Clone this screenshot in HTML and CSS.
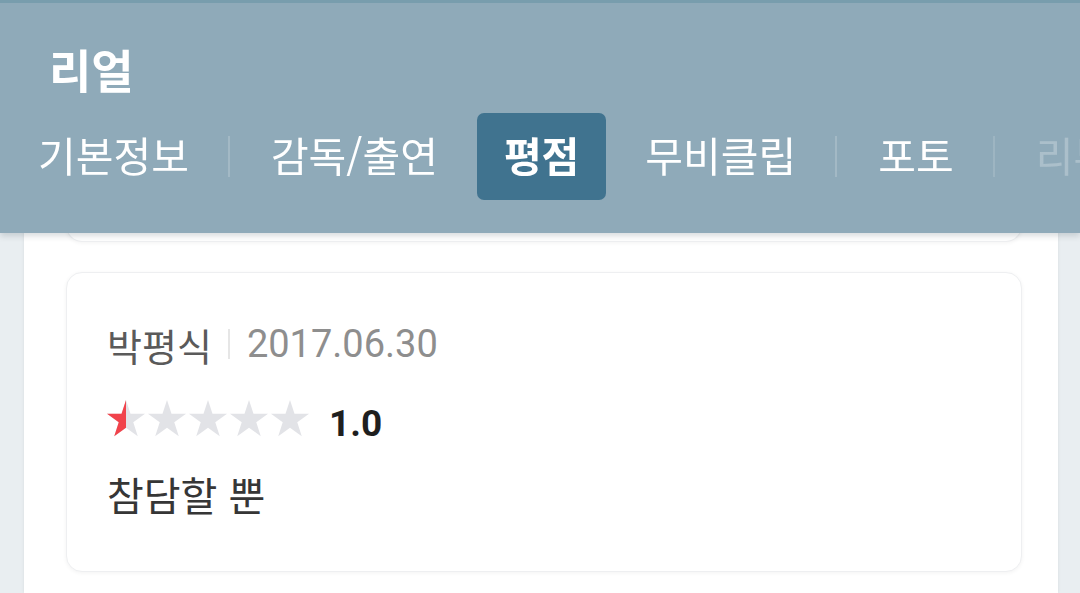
FILE: index.html
```html
<!DOCTYPE html>
<html lang="ko">
<head>
<meta charset="utf-8">
<title>리얼 - 평점</title>
<link rel="stylesheet" href="styles.css">
</head>
<body>
<header class="header">
  <h1 class="title">리얼</h1>
  <nav class="tabs">
    <a class="tab">기본정보</a>
    <span class="sep"></span>
    <a class="tab">감독/출연</a>
    <a class="tab active">평점</a>
    <a class="tab">무비클립</a>
    <span class="sep"></span>
    <a class="tab">포토</a>
    <span class="sep"></span>
    <a class="tab">리뷰</a>
  </nav>
</header>
<main class="panel">
  <div class="list">
    <div class="card prev"></div>
    <div class="card review">
      <div class="meta">
        <span class="name">박평식</span>
        <span class="msep"></span>
        <span class="date">2017.06.30</span>
      </div>
      <div class="rating">
        <svg class="stars" width="203" height="37" viewBox="0 0 203 37">
          <defs>
            <path id="star" d="M0,-20 L4.49,-6.18 L19.02,-6.18 L7.27,2.36 L11.76,16.18 L0,7.64 L-11.76,16.18 L-7.27,2.36 L-19.02,-6.18 L-4.49,-6.18 Z"/>
          </defs>
          <g fill="#e2e3e7">
            <use href="#star" x="19" y="20"/>
            <use href="#star" x="60" y="20"/>
            <use href="#star" x="101" y="20"/>
            <use href="#star" x="142" y="20"/>
            <use href="#star" x="183" y="20"/>
          </g>
          <path fill="#f1434b" transform="translate(19 20)" d="M0,-20 L0,7.64 L-11.76,16.18 L-7.27,2.36 L-19.02,-6.18 L-4.49,-6.18 Z"/>
        </svg>
        <span class="score">1.0</span>
      </div>
      <p class="text">참담할 뿐</p>
    </div>
  </div>
</main>
</body>
</html>
```
FILE: styles.css
```css
html, body {
  margin: 0;
  padding: 0;
}
body {
  background: #e9eef1;
  font-family: Roboto, "Noto Sans CJK KR", sans-serif;
  overflow: hidden;
}
.header {
  position: fixed;
  top: 0;
  left: 0;
  right: 0;
  height: 233px;
  box-sizing: border-box;
  background: #8faab9;
  border-top: 3px solid #789dad;
  box-shadow: 0 3px 6px rgba(40, 60, 70, 0.18);
  padding-top: 37px;
  z-index: 2;
}
.title {
  margin: 0;
  padding-left: 49px;
  font-family: "Noto Sans CJK KR", sans-serif;
  font-size: 46px;
  font-weight: 700;
  line-height: 56px;
  color: #fff;
}
.tabs {
  position: relative;
  margin-top: 17px;
  height: 87px;
  display: flex;
  align-items: center;
  white-space: nowrap;
  overflow: hidden;
  padding-left: 5px;
}
.tabs::after {
  content: "";
  position: absolute;
  top: 0;
  right: 0;
  bottom: 0;
  width: 110px;
  background: linear-gradient(to right, rgba(143, 170, 185, 0), rgba(143, 170, 185, 0.75) 60%);
}
.tab {
  flex: none;
  box-sizing: border-box;
  margin: 0 6px;
  padding: 0 27px 4px;
  height: 87px;
  line-height: 83px;
  font-family: "Noto Sans CJK KR", sans-serif;
  font-size: 41px;
  color: #fff;
  border-radius: 7px;
}
.tab.active {
  padding: 0 27px 4px;
  background: #40738f;
  font-weight: 700;
}
.sep {
  flex: none;
  width: 2px;
  height: 41px;
  margin: 0 8px 0 6px;
  background: rgba(255, 255, 255, 0.18);
}
.panel {
  margin: 0 22px 0 24px;
  min-height: 593px;
  background: #fff;
  box-shadow: 0 0 3px rgba(0, 0, 0, 0.08);
}
.list {
  padding: 0 36px 0 42px;
}
.card {
  background: #fff;
  border: 1px solid #eeeff1;
  border-radius: 16px;
  box-shadow: 0 1px 4px rgba(0, 0, 0, 0.05);
  box-sizing: border-box;
}
.card.prev {
  height: 242px;
  border-top: none;
  border-radius: 0 0 16px 16px;
}
.card.review {
  margin-top: 30px;
  height: 300px;
  padding: 46px 40px 0;
}
.meta {
  display: flex;
  align-items: center;
  height: 50px;
  font-size: 38px;
}
.name {
  color: #5a5a5a;
  font-family: "Noto Sans CJK KR", sans-serif;
}
.msep {
  width: 2px;
  height: 30px;
  margin: 0 17px 0 16px;
  background: #e6e6e6;
}
.date {
  color: #8e8e8e;
  font-family: Roboto, sans-serif;
}
.rating {
  display: flex;
  align-items: flex-end;
  margin-top: 30px;
  height: 38px;
}
.stars {
  display: block;
  flex: none;
}
.score {
  margin-left: 19px;
  margin-bottom: -2px;
  font-family: Roboto, sans-serif;
  font-weight: 700;
  font-size: 37px;
  line-height: 30px;
  color: #1f1f1f;
}
.text {
  margin: 32px 0 0;
  font-family: "Noto Sans CJK KR", sans-serif;
  font-size: 40px;
  line-height: 50px;
  color: #363636;
}
```
